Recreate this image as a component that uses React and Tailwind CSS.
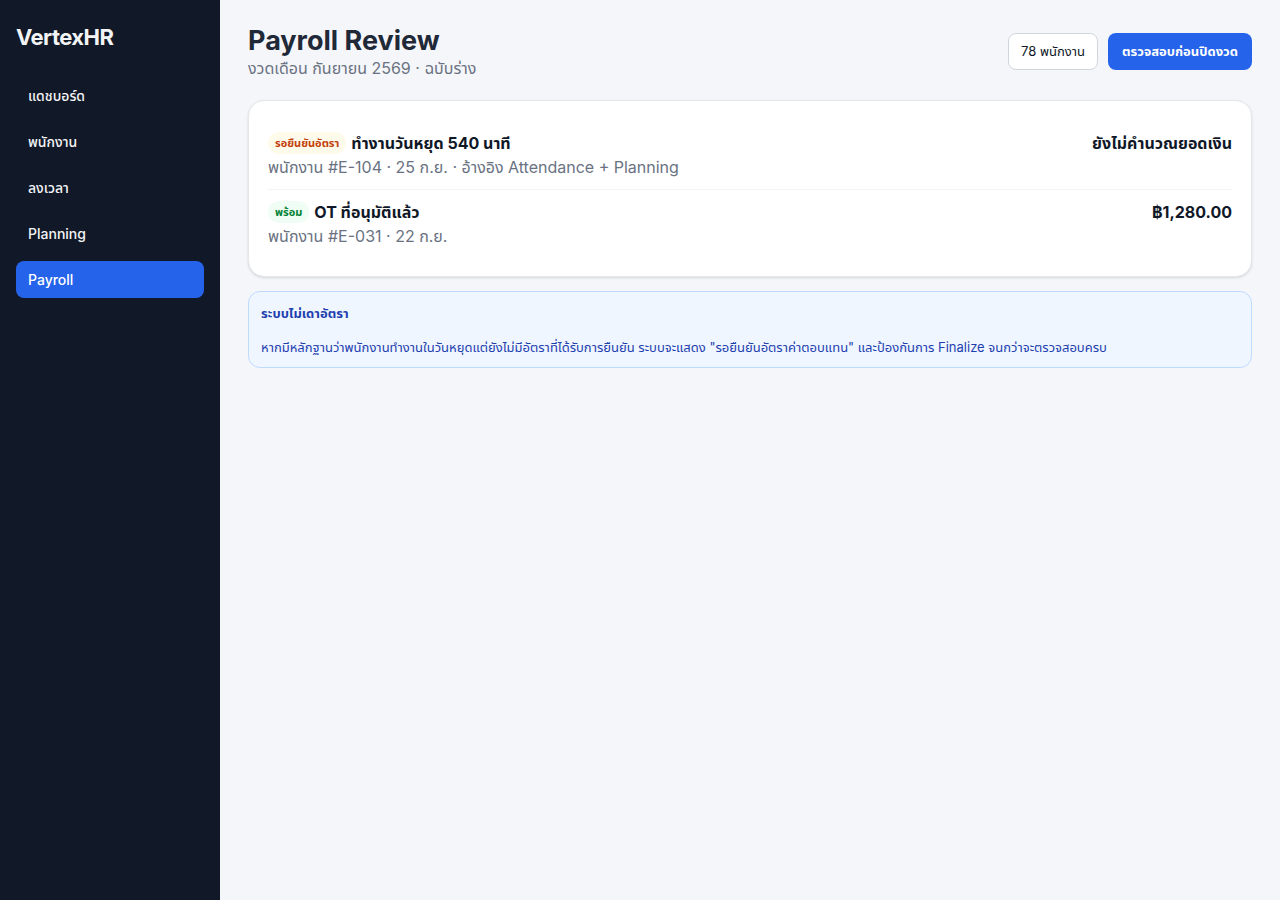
const navItems = [
  { label: 'แดชบอร์ด' },
  { label: 'พนักงาน' },
  { label: 'ลงเวลา' },
  { label: 'Planning' },
  { label: 'Payroll', active: true },
];

const rows = [
  {
    badge: 'รอยืนยันอัตรา',
    badgeClass: 'bg-amber-50 text-[#c2410c]',
    title: 'ทำงานวันหยุด 540 นาที',
    meta: 'พนักงาน #E-104 · 25 ก.ย. · อ้างอิง Attendance + Planning',
    amount: 'ยังไม่คำนวณยอดเงิน',
  },
  {
    badge: 'พร้อม',
    badgeClass: 'bg-green-50 text-green-700',
    title: 'OT ที่อนุมัติแล้ว',
    meta: 'พนักงาน #E-031 · 22 ก.ย.',
    amount: '฿1,280.00',
  },
];

const App = () => {
  return (
    <div className="flex min-h-[900px] font-['Inter','Noto_Sans','Noto_Sans_Thai',sans-serif] text-gray-900">
      <aside className="w-[220px] shrink-0 bg-[#111827] px-4 pt-[21px]">
        <div className="mb-[23px] text-[22px] font-bold tracking-tight text-gray-100">VertexHR</div>
        <nav className="flex flex-col gap-[9px]">
          {navItems.map((item) => (
            <div
              key={item.label}
              className={`flex h-[37px] items-center rounded-lg px-3 text-sm font-medium ${
                item.active ? 'bg-[#2563eb] text-white' : 'text-gray-100'
              }`}
            >
              {item.label}
            </div>
          ))}
        </nav>
      </aside>

      <main className="flex-1 bg-[#f5f6fa] px-7 pt-[26px]">
        <header className="flex items-start justify-between">
          <div>
            <h1 className="text-[27px] font-bold leading-[30px] text-[#1f2937]">Payroll Review</h1>
            <p className="text-base text-gray-500">งวดเดือน กันยายน 2569 · ฉบับร่าง</p>
          </div>
          <div className="mt-[7px] flex items-center gap-[10px]">
            <div className="flex h-[37px] items-center rounded-lg border border-gray-300 bg-white px-3 text-[13px] text-gray-900">
              78 พนักงาน
            </div>
            <div className="flex h-[37px] items-center rounded-lg bg-[#2563eb] px-[14px] text-[13px] font-bold text-white">
              ตรวจสอบก่อนปิดงวด
            </div>
          </div>
        </header>

        <section className="mt-[20px] rounded-2xl border border-gray-200 bg-white px-[19px] pt-[30px] pb-[28px] shadow-sm">
          {rows.map((row, i) => (
            <div
              key={row.title}
              className={`flex items-start justify-between ${i > 0 ? 'border-t border-gray-100 pt-[10px]' : 'pb-[10px]'}`}
            >
              <div>
                <div className="flex items-center gap-[5px]">
                  <span className={`rounded-full px-[7px] py-[3px] text-[11px] font-bold ${row.badgeClass}`}>{row.badge}</span>
                  <span className="text-base font-bold text-gray-900">{row.title}</span>
                </div>
                <p className="text-base text-gray-500">{row.meta}</p>
              </div>
              <div className="text-base font-bold text-gray-900">{row.amount}</div>
            </div>
          ))}
        </section>

        <section className="mt-[14px] rounded-xl border border-blue-200 bg-[#eff6ff] px-3 pt-3 pb-[10px]">
          <p className="text-[13px] font-bold text-[#1e40af]">ระบบไม่เดาอัตรา</p>
          <p className="mt-[14px] text-[13px] text-[#1e40af]">
            หากมีหลักฐานว่าพนักงานทำงานในวันหยุดแต่ยังไม่มีอัตราที่ได้รับการยืนยัน ระบบจะแสดง "รอยืนยันอัตราค่าตอบแทน" และป้องกันการ Finalize จนกว่าจะตรวจสอบครบ
          </p>
        </section>
      </main>
    </div>
  );
};

export default App;
